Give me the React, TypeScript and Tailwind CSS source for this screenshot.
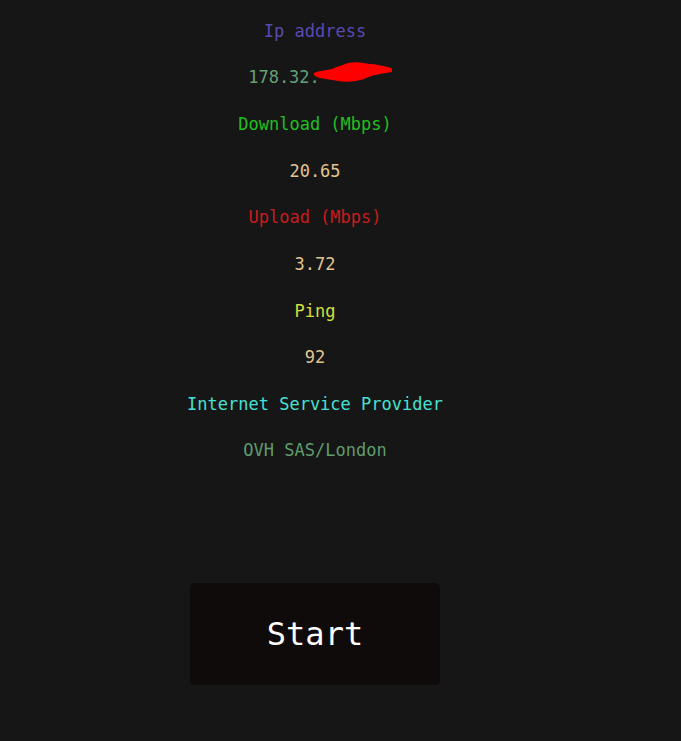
import React from "react";

const rows: { text: string; color: string }[] = [
  { text: "Ip address", color: "text-[#574bb0]" },
  { text: "178.32.", color: "text-[#66a077]" },
  { text: "Download (Mbps)", color: "text-[#1fc01f]" },
  { text: "20.65", color: "text-[#e2c492]" },
  { text: "Upload (Mbps)", color: "text-[#c81c1c]" },
  { text: "3.72", color: "text-[#e2c492]" },
  { text: "Ping", color: "text-[#cfe03e]" },
  { text: "92", color: "text-[#e2c492]" },
  { text: "Internet Service Provider", color: "text-[#48e0d4]" },
  { text: "OVH SAS/London", color: "text-[#5f9c6c]" },
];

export default function App() {
  return (
    <div className="min-h-[741px] w-full bg-[#161616] font-['DejaVu_Sans_Mono',monospace]">
      <div className="flex w-[630px] flex-col items-center pt-[8px]">
        {rows.map((r, i) => (
          <div
            key={i}
            className={`flex h-[46.67px] items-center justify-center text-[17px] ${r.color}`}
          >
            {i === 1 ? (
              <span className="relative">
                178.32.
                <span className="inline-block w-[62px]" />
                <svg
                  className="absolute left-[64px] top-[-5px]"
                  width="82"
                  height="26"
                  viewBox="0 0 82 26"
                >
                  <path
                    d="M2 13 C8 10 14 11 20 9 C26 6 32 5 36 3 C44 1 52 3 58 4 C64 4 70 6 76 7 C80 8 81 10 78 11 C72 12 68 14 62 15 C56 17 50 20 44 21 C38 22 32 22 26 21 C20 20 14 19 8 18 C4 17 1 15 2 13 Z"
                    fill="#ff0000"
                  />
                  <path
                    d="M6 12 C16 10 28 9 40 10 C52 10 64 9 80 9 L80 12 C68 14 56 16 44 18 C32 19 20 18 8 16 Z"
                    fill="#ff0000"
                  />
                </svg>
              </span>
            ) : (
              r.text
            )}
          </div>
        ))}
        <button className="mt-[108px] flex h-[102px] w-[250px] items-center justify-center rounded-[5px] bg-[#0f0b0b] text-[32px] text-white">
          Start
        </button>
      </div>
    </div>
  );
}
